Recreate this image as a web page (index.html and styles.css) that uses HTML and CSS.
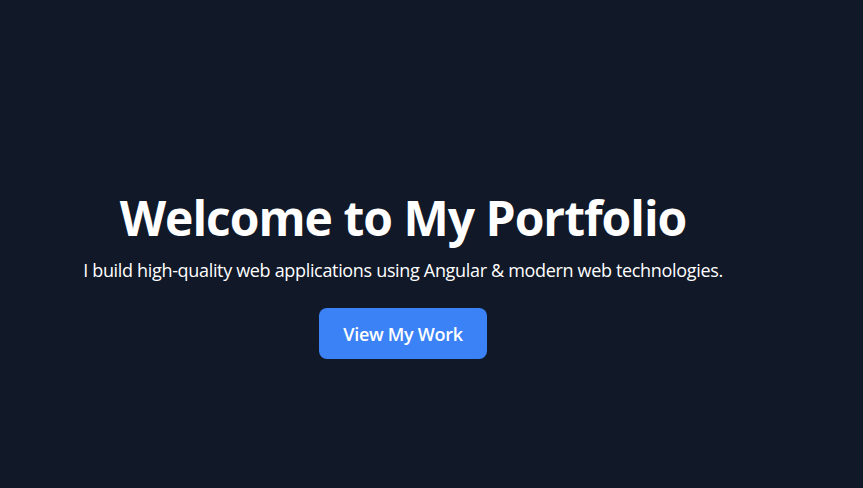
FILE: index.html
```html
<!DOCTYPE html>
<html lang="en">
<head>
<meta charset="utf-8">
<title>Portfolio</title>
<link rel="stylesheet" href="styles.css">
</head>
<body>
<main class="hero">
  <div class="hero-content">
    <h1 class="hero-title">Welcome to My Portfolio</h1>
    <p class="hero-subtitle">I build high-quality web applications using Angular &amp; modern web technologies.</p>
    <a class="hero-button" href="#work">View My Work</a>
  </div>
</main>
</body>
</html>
```

FILE: styles.css
```css
html, body {
  margin: 0;
  padding: 0;
  background: #111827;
  height: 100%;
}

body {
  font-family: "Open Sans", "Noto Sans", sans-serif;
  color: #ffffff;
}

.hero {
  min-height: 100%;
  box-sizing: border-box;
  padding: 190px 57px 0 0;
  display: flex;
  justify-content: center;
}

.hero-content {
  display: flex;
  flex-direction: column;
  align-items: center;
  text-align: center;
}

.hero-title {
  margin: 0;
  font-size: 48px;
  line-height: 56px;
  font-weight: 700;
  letter-spacing: -1px;
}

.hero-subtitle {
  margin: 10px 0 0;
  font-size: 18px;
  line-height: 28px;
  letter-spacing: -0.33px;
}

.hero-button {
  margin-top: 24px;
  display: inline-block;
  background: #3b82f6;
  color: #ffffff;
  text-decoration: none;
  font-size: 18px;
  font-weight: 600;
  line-height: 28px;
  letter-spacing: -0.3px;
  padding: 12px 24px 11px;
  border-radius: 8px;
}
```
